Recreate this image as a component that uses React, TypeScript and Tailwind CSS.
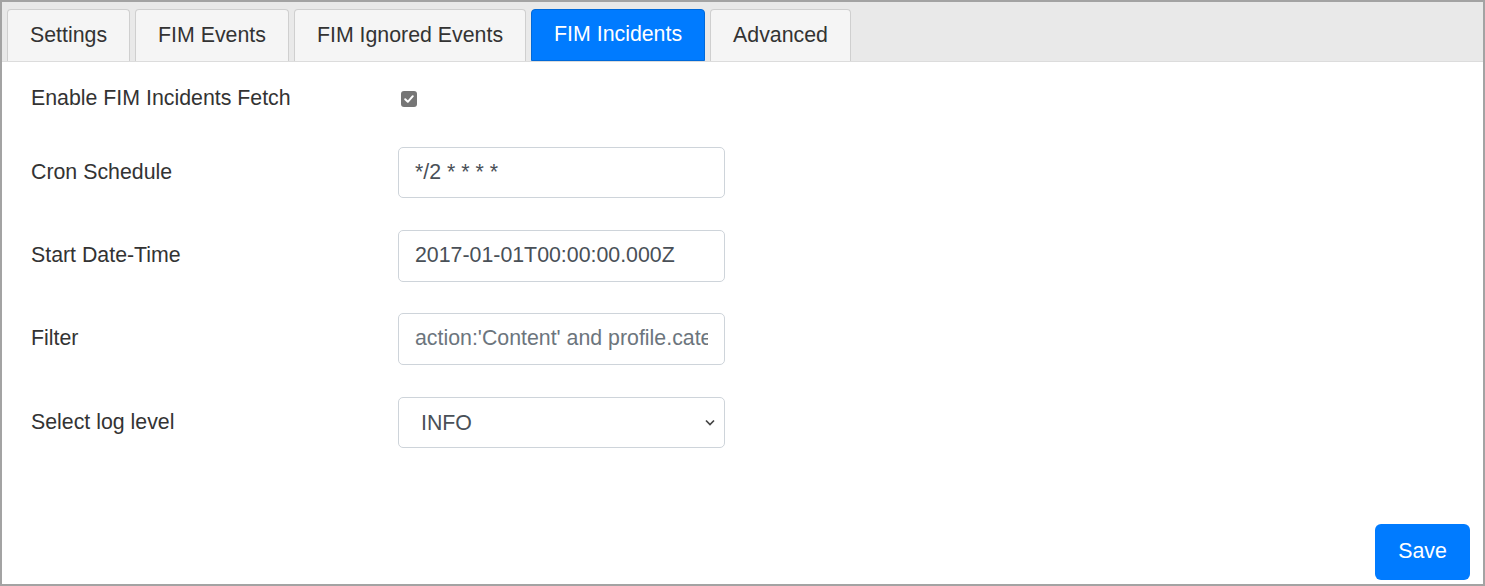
import React from "react";

const tabs = ["Settings", "FIM Events", "FIM Ignored Events", "FIM Incidents", "Advanced"];

function Row({ label, children }: { label: string; children: React.ReactNode }) {
  return (
    <div className="flex items-center h-[51px]">
      <div className="w-[367px] text-[#333333]">{label}</div>
      {children}
    </div>
  );
}

export default function App() {
  return (
    <div
      className="w-[1485px] h-[586px] border-2 border-[#a3a3a3] bg-white flex flex-col text-[21.33px]"
      style={{ fontFamily: '"Liberation Sans", Arial, sans-serif' }}
    >
      <div className="bg-[#e9e9e9] flex items-end gap-[5px] pl-[5px] pt-[7px] border-b border-[#dcdcdc]">
        {tabs.map((t) => {
          const active = t === "FIM Incidents";
          return (
            <div
              key={t}
              className={
                active
                  ? "h-[52px] px-[22px] flex items-center rounded-t-[4px] border border-[#0069d9] bg-[#007bff] text-white"
                  : "h-[52px] px-[22px] flex items-center rounded-t-[4px] border border-b-0 border-[#cfcfcf] bg-[#f5f5f5] text-[#333333]"
              }
            >
              {t}
            </div>
          );
        })}
      </div>
      <div className="flex-1 flex flex-col pl-[29px]">
        <div className="flex items-center h-[24px] mt-[25px]">
          <div className="w-[370px] text-[#333333]">Enable FIM Incidents Fetch</div>
          <div className="w-[16px] h-[16px] rounded-[3px] bg-[#767676] flex items-center justify-center">
            <svg width="12" height="12" viewBox="0 0 12 12">
              <path d="M2.2 6.3 L4.8 8.8 L9.8 3.2" fill="none" stroke="white" strokeWidth="2" strokeLinecap="round" strokeLinejoin="round" />
            </svg>
          </div>
        </div>
        <div className="flex flex-col mt-[36px]">
          <Row label="Cron Schedule">
            <div className="w-[327px] h-[51px] border border-[#ced4da] rounded-[5px] flex items-center px-[16px] text-[#495057]">
              */2 * * * *
            </div>
          </Row>
          <div className="mt-[32px]">
            <Row label="Start Date-Time">
              <div className="w-[327px] h-[52px] border border-[#ced4da] rounded-[5px] flex items-center px-[16px] text-[#495057]">
                2017-01-01T00:00:00.000Z
              </div>
            </Row>
          </div>
          <div className="mt-[32px]">
            <Row label="Filter">
              <div className="w-[327px] h-[52px] border border-[#ced4da] rounded-[5px] flex items-center px-[16px] text-[#6c757d] overflow-hidden whitespace-nowrap">
                <span className="block w-[293px] overflow-hidden">action:'Content' and profile.category:'Incident'</span>
              </div>
            </Row>
          </div>
          <div className="mt-[33px]">
            <Row label="Select log level">
              <div className="w-[327px] h-[51px] border border-[#ced4da] rounded-[5px] flex items-center justify-between pl-[22px] pr-[7px] text-[#495057]">
                <span className="mt-[2px]">INFO</span>
                <svg width="14" height="9" viewBox="0 0 14 9">
                  <path d="M3 2.5 L7 6.5 L11 2.5" fill="none" stroke="#444" strokeWidth="1.7" />
                </svg>
              </div>
            </Row>
          </div>
        </div>
        <div className="flex-1" />
        <div className="flex justify-end pr-[13px] pb-[4px]">
          <div className="w-[95px] h-[56px] rounded-[6px] bg-[#007bff] text-white flex items-center justify-center">
            Save
          </div>
        </div>
      </div>
    </div>
  );
}
